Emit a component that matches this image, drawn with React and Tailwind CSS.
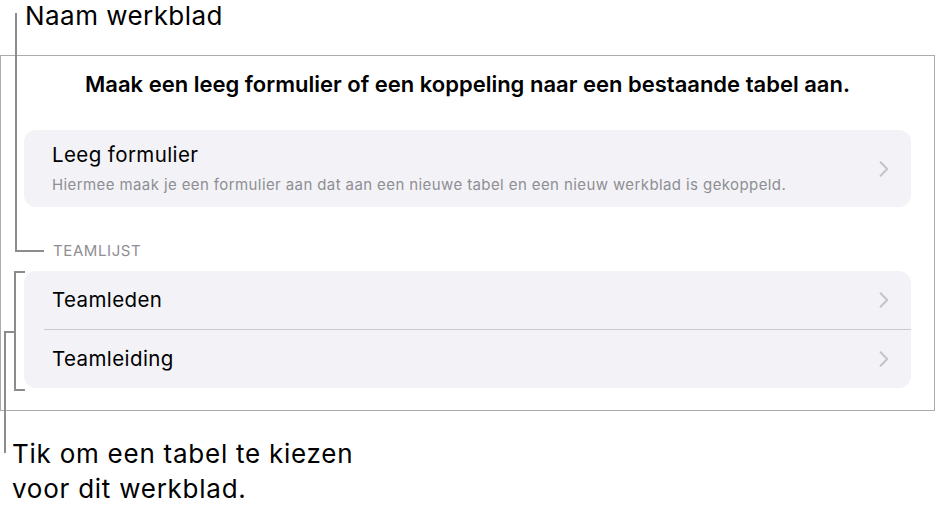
import React from "react";

function Chevron() {
  return (
    <svg width="10" height="16" viewBox="0 0 10 16" className="shrink-0">
      <path d="M1.6 1.2 L8.2 8 L1.6 14.8" fill="none" stroke="#c4c4c7" strokeWidth="2" strokeLinecap="round" strokeLinejoin="round" />
    </svg>
  );
}

export default function App() {
  return (
    <div className="relative w-[935px] h-[515px] bg-white overflow-hidden text-black" style={{ fontFamily: "Inter, 'Noto Sans', sans-serif" }}>
      <div className="h-[55px] pl-[25px] text-[26px] leading-[31px] tracking-[0.45px]">Naam werkblad</div>

      <div className="w-[935px] h-[356px] border border-[#ababab] px-[23px]">
        <div className="pt-[15px] h-[74px] text-center font-semibold text-[22px] leading-[26px]">
          Maak een leeg formulier of een koppeling naar een bestaande tabel aan.
        </div>
        <div className="h-[77px] rounded-[12px] bg-[#f3f3f7] pl-[28px] pr-[22px] flex items-center justify-between">
          <div className="flex flex-col self-start pt-[13px]">
            <div className="text-[20.5px] leading-[24px] tracking-[0.4px]">Leeg formulier</div>
            <div className="text-[15px] leading-[18px] mt-[9px] tracking-[0.4px] text-[#8e8e93]">
              Hiermee maak je een formulier aan dat aan een nieuwe tabel en een nieuw werkblad is gekoppeld.
            </div>
          </div>
          <Chevron />
        </div>
        <div className="h-[64px] pl-[29px] pt-[35px] text-[15px] leading-[18px] tracking-[0.6px] text-[#8e8e93]">TEAMLIJST</div>
        <div className="h-[117px] rounded-[12px] bg-[#f3f3f7] flex flex-col">
          <div className="h-[58px] pl-[28px] pr-[22px] flex items-center justify-between">
            <span className="text-[20.5px] tracking-[0.4px]">Teamleden</span>
            <Chevron />
          </div>
          <div className="ml-[20px] h-px bg-[#cbcbcf]" />
          <div className="h-[58px] pl-[28px] pr-[22px] flex items-center justify-between">
            <span className="text-[20.5px] tracking-[0.4px]">Teamleiding</span>
            <Chevron />
          </div>
        </div>
      </div>

      <div className="pl-[12px] pt-[25px] text-[26px] leading-[35px] tracking-[0.75px]">
        Tik om een tabel te kiezen
        <br />
        voor dit werkblad.
      </div>

      {/* callout lines */}
      <div className="absolute left-[15px] top-[13px] w-[2px] h-[239px] bg-[#8c8c8c]" />
      <div className="absolute left-[15px] top-[250px] w-[29px] h-[2px] bg-[#8c8c8c]" />

      <div className="absolute left-[14px] top-[271px] w-[2px] h-[120px] bg-[#8c8c8c]" />
      <div className="absolute left-[14px] top-[271px] w-[11px] h-[2px] bg-[#8c8c8c]" />
      <div className="absolute left-[14px] top-[389px] w-[11px] h-[2px] bg-[#8c8c8c]" />

      <div className="absolute left-[4px] top-[331px] w-[11px] h-[2px] bg-[#8c8c8c]" />
      <div className="absolute left-[4px] top-[331px] w-[2px] h-[122px] bg-[#8c8c8c]" />
    </div>
  );
}
